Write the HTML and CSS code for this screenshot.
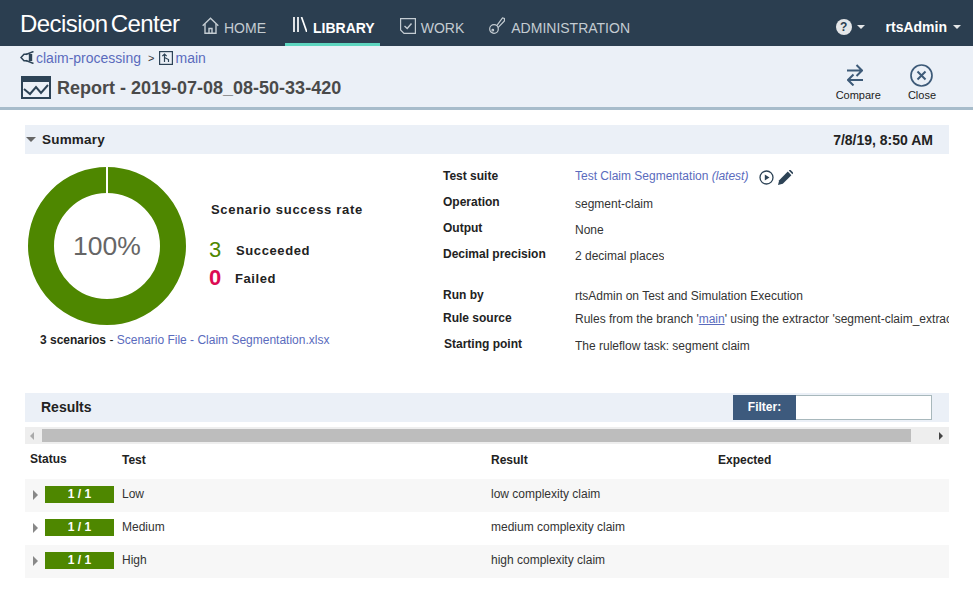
FILE: index.html
```html
<!DOCTYPE html>
<html lang="en">

<head>
    <meta charset="UTF-8">
    <meta name="viewport" content="width=device-width, initial-scale=1.0">
    <title>Decision Center</title>
    <link rel="stylesheet" href="styles.css">
</head>

<body>
    <!-- top navigation -->
    <header class="nav">
        <div class="brand"><span>Decision</span><span class="brand-two">Center</span></div>
        <a class="nav-item">
            <svg width="17" height="17" viewBox="0 0 17 17" fill="none" stroke="#c4ccd2" stroke-width="1.4">
                <path d="M0.7 8.8 L8.5 1.2 L16.3 8.8" />
                <path d="M3 7 V16.2 H14 V7" />
                <path d="M7 16.2 V11.5 H10 V16.2" />
            </svg>
            HOME
        </a>
        <a class="nav-item nav-active">
            <svg width="15" height="15" viewBox="0 0 15 15" fill="none" stroke="#fff" stroke-width="1.7">
                <path d="M2 0 V15" />
                <path d="M6 0 V15" />
                <path d="M9.5 0 L14.8 15" />
            </svg>
            LIBRARY
        </a>
        <a class="nav-item">
            <svg width="16" height="16" viewBox="0 0 16 16" fill="none" stroke="#c4ccd2" stroke-width="1.2">
                <path d="M0.6 0.6 H15.4 V15.4 H4 L0.6 12 Z" />
                <path d="M4.5 8 L7.2 10.5 L11.5 5.5" stroke-width="1.4" />
            </svg>
            WORK
        </a>
        <a class="nav-item nav-admin">
            <svg width="16" height="17" viewBox="0 0 16 17" fill="none" stroke="#c4ccd2" stroke-width="1.2">
                <circle cx="5" cy="12" r="4.3" />
                <circle cx="3.8" cy="13.2" r="0.8" />
                <path d="M7.8 8.6 L13.5 1 L15.5 1.5 L15.4 4 L9 10.6" />
            </svg>
            ADMINISTRATION
        </a>
        <div class="nav-right">
            <span class="help-icon">?</span>
            <span class="caret"></span>
            <span class="user">rtsAdmin</span>
            <span class="caret"></span>
        </div>
    </header>

    <!-- breadcrumb and page title -->
    <section class="subheader">
        <div class="subheader-left">
            <div class="crumbs">
                <svg class="crumb-icon crumb-first" width="15" height="13" viewBox="0 0 15 13" fill="none" stroke="#2d4356" stroke-width="1.5">
                    <path d="M7 3.2 H4 L1 6.5 L4 9.8 H7" />
                    <path d="M6 3.5 L13.5 0.5 M6 9.5 L13.5 12.5" />
                    <path d="M10.5 3 V10" stroke-width="3.4" />
                </svg>
                <a class="link">claim-processing</a>
                <span class="crumb-sep">&gt;</span>
                <svg class="crumb-icon" width="14" height="14" viewBox="0 0 14 14" fill="none" stroke="#2d4356" stroke-width="1.2">
                    <rect x="0.6" y="0.6" width="12.8" height="12.8" />
                    <path d="M5.5 11 V3 M3.3 5.2 L5.5 3 L7.7 5.2 M5.5 6.5 L9.5 8.5 V11" />
                </svg>
                <a class="link">main</a>
            </div>
            <h1 class="title">
                <svg width="30" height="23" viewBox="0 0 30 23">
                    <rect x="0" y="0" width="30" height="23" fill="#2d4356" />
                    <rect x="2" y="6" width="26" height="15" fill="#ebf0f7" />
                    <path d="M3 13 L9 18 L15 11 L20 17 L27 9" fill="none" stroke="#2d4356" stroke-width="2" />
                </svg>
                Report - 2019-07-08_08-50-33-420
            </h1>
        </div>
        <div class="actions">
            <a class="action action-compare">
                <svg width="16" height="22" viewBox="0 0 16 22" fill="none" stroke="#3d5a78" stroke-width="2">
                    <path d="M0 6.5 H15 M9.5 1 L15 6.5 L9.5 12" />
                    <path d="M16 16 H1 M6.5 10.5 L1 16 L6.5 21.5" />
                </svg>
                Compare
            </a>
            <a class="action">
                <svg width="23" height="23" viewBox="0 0 23 23" fill="none" stroke="#3d5a78" stroke-width="1.7">
                    <circle cx="11.5" cy="11.5" r="10.5" />
                    <path d="M7.5 7.5 L15.5 15.5 M15.5 7.5 L7.5 15.5" stroke-width="2" />
                </svg>
                Close
            </a>
        </div>
    </section>

    <main class="content">
        <div class="bar">
            <div class="bar-left"><span class="caret caret-grey"></span>Summary</div>
            <div class="bar-date">7/8/19, 8:50 AM</div>
        </div>

        <div class="summary">
            <div class="summary-left">
                <div class="chart-row">
                    <div class="donut">
                        <svg width="160" height="160" viewBox="0 0 160 160">
                            <circle cx="80" cy="80" r="66" fill="none" stroke="#4e8700" stroke-width="26" />
                            <rect x="79" y="0" width="2" height="28" fill="#fff" />
                        </svg>
                        <span class="donut-label">100%</span>
                    </div>
                    <div class="rate">
                        <h3 class="rate-title">Scenario success rate</h3>
                        <div class="rate-line"><span class="rate-num rate-ok">3</span><b>Succeeded</b></div>
                        <div class="rate-line"><span class="rate-num rate-bad">0</span><b>Failed</b></div>
                    </div>
                </div>
                <p class="scenarios"><b>3 scenarios</b> - <a class="link">Scenario File - Claim Segmentation.xlsx</a></p>
            </div>

            <div class="details">
                <div class="detail detail-suite"><b>Test suite</b>
                    <span class="value">
                        <a class="link">Test Claim Segmentation <i>(latest)</i></a>
                        <svg class="run-icon" width="15" height="15" viewBox="0 0 15 15">
                            <circle cx="7.5" cy="7.5" r="6.5" fill="none" stroke="#2d4356" stroke-width="1.3" />
                            <path d="M5.8 4.5 L10.5 7.5 L5.8 10.5 Z" fill="#2d4356" />
                        </svg>
                        <svg width="15" height="15" viewBox="0 0 15 15" fill="#2d4356">
                            <path d="M0 15 L1.2 10.2 L9.8 1.6 L13.4 5.2 L4.8 13.8 Z" />
                            <path d="M10.8 0.6 L11.6 0 Q12.2 -0.2 12.8 0.2 L14.8 2.2 Q15.2 2.8 14.9 3.4 L14.4 4.2 Z" />
                        </svg>
                    </span>
                </div>
                <div class="detail"><b>Operation</b><span class="value">segment-claim</span></div>
                <div class="detail"><b>Output</b><span class="value">None</span></div>
                <div class="detail group-end"><b>Decimal precision</b><span class="value">2 decimal places</span></div>
                <div class="detail detail-tight"><b>Run by</b><span class="value">rtsAdmin on Test and Simulation Execution</span></div>
                <div class="detail detail-tight detail-rule"><b>Rule source</b><span class="value">Rules from the branch '<a class="link link-under">main</a>' using the extractor 'segment-claim_extractor'</span></div>
                <div class="detail detail-start"><b>Starting point</b><span class="value">The ruleflow task: segment claim</span></div>
            </div>
        </div>

        <div class="bar bar-results">
            <div class="results-title">Results</div>
            <div class="filter">
                <span class="filter-label">Filter:</span>
                <input class="filter-input" type="text">
            </div>
        </div>

        <div class="scrollbar">
            <span class="arrow arrow-left"></span>
            <div class="scroll-thumb"></div>
            <span class="arrow arrow-right"></span>
        </div>

        <table class="results">
            <thead>
                <tr>
                    <th class="col-status">Status</th>
                    <th class="col-test">Test</th>
                    <th class="col-result">Result</th>
                    <th>Expected</th>
                </tr>
            </thead>
            <tbody>
                <tr>
                    <td class="cell-status"><span class="expand"></span><span class="badge">1 / 1</span></td>
                    <td>Low</td>
                    <td>low complexity claim</td>
                    <td></td>
                </tr>
                <tr>
                    <td class="cell-status"><span class="expand"></span><span class="badge">1 / 1</span></td>
                    <td>Medium</td>
                    <td>medium complexity claim</td>
                    <td></td>
                </tr>
                <tr>
                    <td class="cell-status"><span class="expand"></span><span class="badge">1 / 1</span></td>
                    <td>High</td>
                    <td>high complexity claim</td>
                    <td></td>
                </tr>
            </tbody>
        </table>
    </main>
</body>

</html>
```

FILE: styles.css
```css
* {
    box-sizing: border-box;
}

html,
body {
    height: 589px;
    overflow: hidden;
}

body {
    margin: 0;
    font-family: "Liberation Sans", Arial, sans-serif;
    font-size: 12px;
    color: #222;
    background-color: white;
}

.link {
    color: #5a6bbd;
}

/* nav */
.nav {
    display: flex;
    align-items: stretch;
    height: 46px;
    padding-left: 20px;
    background-color: #2b3e50;
    color: #c4ccd2;
}

.brand {
    width: 182px;
    padding-top: 10px;
    font-size: 24px;
    letter-spacing: -0.55px;
    color: white;
}

.brand-two {
    margin-left: 3px;
}

.nav-item {
    display: flex;
    align-items: center;
    gap: 5px;
    padding-top: 10px;
    margin-right: 25px;
    font-size: 14px;
}

.nav-item svg {
    margin-top: -5px;
}

.nav-item:first-of-type {
    margin-right: 19px;
}

.nav-active {
    gap: 6px;
    padding: 13px 5px 0 7px;
    margin-right: 20px;
    font-weight: bold;
    color: white;
    border-bottom: 3px solid #5dd5bf;
}

.nav-active svg {
    margin-top: -8px;
}

.nav-admin {
    gap: 6px;
}

.nav-right {
    display: flex;
    align-items: center;
    margin-left: auto;
    padding: 8px 12px 0 0;
}

.help-icon {
    width: 16px;
    height: 16px;
    margin-right: 5px;
    border-radius: 50%;
    background-color: #e4e6e8;
    color: #2b3e50;
    font-size: 12px;
    font-weight: bold;
    line-height: 16px;
    text-align: center;
}

.user {
    margin: 0 6px 0 21px;
    font-size: 14px;
    font-weight: bold;
    color: white;
}

.caret {
    display: inline-block;
    border-left: 4px solid transparent;
    border-right: 4px solid transparent;
    border-top: 4px solid #e4e6e8;
}

.caret-grey {
    margin: 0 6px 0 1px;
    border-left-width: 5px;
    border-right-width: 5px;
    border-top: 5px solid #666;
}

/* subheader */
.subheader {
    display: flex;
    justify-content: space-between;
    height: 64px;
    padding: 3px 37px 0 20px;
    background-color: #ebf0f7;
    border-bottom: 3px solid #a7bccb;
}

.crumbs {
    display: flex;
    align-items: center;
    height: 17px;
    font-size: 14px;
}

.crumb-icon {
    margin-right: 2px;
}

.crumb-first {
    margin-right: 1px;
}

.crumb-sep {
    margin: 0 5px 0 7px;
    font-size: 11px;
    color: #333;
}

.title {
    display: flex;
    align-items: center;
    gap: 6px;
    margin: 11px 0 0 1px;
    font-size: 18px;
    color: #4a4a4a;
}

.title svg {
    margin-top: -1px;
}

.actions {
    display: flex;
    gap: 27px;
    padding-top: 15px;
}

.action {
    display: flex;
    flex-direction: column;
    align-items: center;
    gap: 2px;
    font-size: 11px;
    color: #222;
}

.action-compare svg {
    margin: 0 7px 1px 0;
}

/* summary */
.content {
    padding: 15px 24px 0 25px;
}

.bar {
    display: flex;
    align-items: center;
    justify-content: space-between;
    height: 29px;
    background-color: #ebf0f7;
    font-weight: bold;
}

.bar-left {
    display: flex;
    align-items: center;
    font-size: 13.5px;
    letter-spacing: 0.2px;
}

.bar-date {
    padding-right: 16px;
    font-size: 14px;
}

.summary {
    display: flex;
    height: 239px;
}

.summary-left {
    width: 418px;
    padding: 12px 0 0 2px;
}

.chart-row {
    display: flex;
    align-items: flex-start;
}

.donut {
    position: relative;
    width: 160px;
    height: 160px;
}

.donut-label {
    position: absolute;
    top: 65px;
    left: 0;
    width: 160px;
    text-align: center;
    font-size: 26.5px;
    color: #666;
}

.rate {
    padding: 36px 0 0 24px;
}

.rate-title {
    margin: 0 0 19px;
    font-size: 13px;
    letter-spacing: 0.7px;
}

.rate-line {
    display: flex;
    align-items: center;
    height: 28px;
    font-size: 13px;
    letter-spacing: 0.6px;
}

.rate-num {
    width: 27px;
    margin-left: -2px;
    font-size: 22px;
}

.rate-ok {
    color: #4e8700;
}

.rate-bad {
    width: 26px;
    font-weight: bold;
    color: #dc0b53;
}

.scenarios {
    margin: 7px 0 0 13px;
}

.details {
    padding-top: 10px;
}

.detail {
    display: flex;
    align-items: center;
    height: 26px;
}

.detail b {
    width: 132px;
    margin-top: -2px;
}

.value {
    display: flex;
    align-items: center;
    max-width: 374px;
    margin-top: 2px;
    overflow: hidden;
    white-space: pre;
    color: #333;
}

.value i {
    font-size: 12px;
}

.value svg {
    margin-top: 2px;
}

.detail-suite .value {
    margin-top: -2px;
}

.detail-tight {
    height: 23px;
}

.detail-tight .value {
    margin-top: 0;
}

.detail-rule {
    margin-bottom: 2px;
}

.detail-start b {
    width: 131px;
    margin-left: 1px;
}

.group-end {
    margin-bottom: 16px;
}

.link-under {
    text-decoration: underline;
}

.run-icon {
    margin: 0 4px 0 11px;
}

/* results */
.results-title {
    padding: 0 0 2px 16px;
    font-size: 14px;
}

.filter {
    display: flex;
    height: 25px;
    margin-right: 17px;
}

.filter-label {
    width: 63px;
    background-color: #3d5a7d;
    color: white;
    line-height: 25px;
    text-align: center;
}

.filter-input {
    width: 136px;
    height: 25px;
    border: 1px solid #a8b8bc;
    border-left: none;
    background-color: white;
}

.scrollbar {
    display: flex;
    align-items: center;
    height: 17px;
    margin-top: 5px;
    background-color: #eee;
}

.scroll-thumb {
    width: 869px;
    height: 13px;
    margin-left: 17px;
    background-color: #bdbdbd;
}

.arrow {
    position: absolute;
    border-top: 4px solid transparent;
    border-bottom: 4px solid transparent;
}

.arrow-left {
    margin-left: 5px;
    border-right: 4px solid #aaa;
}

.arrow-right {
    margin-left: 914px;
    border-left: 4px solid #444;
}

.results {
    width: 924px;
    border-collapse: collapse;
    table-layout: fixed;
}

.results th {
    height: 35px;
    padding: 0 0 3px;
    text-align: left;
}

.results .col-status {
    width: 97px;
    padding: 0 0 5px 5px;
}

.col-test {
    width: 369px;
}

.col-result {
    width: 227px;
}

.results td {
    height: 33px;
    padding: 0 0 4px;
    color: #333;
}

.results tbody tr:nth-child(odd) {
    background-color: #f7f7f7;
}

.results .cell-status {
    padding: 0 0 2px 8px;
}

.expand {
    display: inline-block;
    margin-right: 7px;
    vertical-align: middle;
    border-top: 5px solid transparent;
    border-bottom: 5px solid transparent;
    border-left: 5px solid #888;
}

.badge {
    display: inline-block;
    width: 69px;
    height: 17px;
    vertical-align: middle;
    background-color: #4e8700;
    color: white;
    font-weight: bold;
    line-height: 17px;
    text-align: center;
}
```
